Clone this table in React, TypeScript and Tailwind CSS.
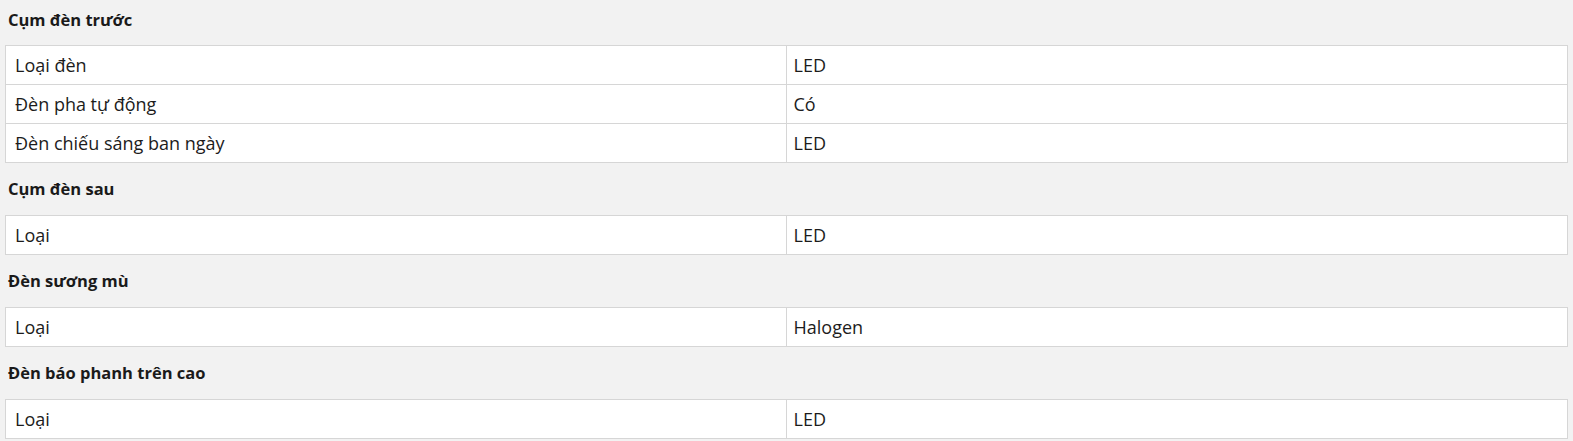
const sections = [
  {
    title: "Cụm đèn trước",
    rows: [
      ["Loại đèn", "LED"],
      ["Đèn pha tự động", "Có"],
      ["Đèn chiếu sáng ban ngày", "LED"],
    ],
  },
  { title: "Cụm đèn sau", rows: [["Loại", "LED"]] },
  { title: "Đèn sương mù", rows: [["Loại", "Halogen"]] },
  { title: "Đèn báo phanh trên cao", rows: [["Loại", "LED"]] },
]

export default function App() {
  return (
    <div className="min-h-screen w-full bg-[#f2f2f2] px-[5px] font-['Open_Sans','Noto_Sans',sans-serif] text-[#1c1c1c]">
      {sections.map((section, i) => (
        <div key={section.title}>
          {/* tiêu đề nhóm */}
          <div
            className={
              i === 0
                ? "flex h-[45px] items-center pb-[5px] pl-[3px] text-[16.5px] font-bold text-[#1a1a1a]"
                : "flex h-[52px] items-center pl-[3px] text-[16.5px] font-bold text-[#1a1a1a]"
            }
          >
            {section.title}
          </div>
          <div className="border border-[#d6d6d6] bg-white">
            {section.rows.map(([label, value], idx) => (
              <div
                key={label}
                className={
                  idx === 0
                    ? "grid h-[38px] grid-cols-2"
                    : "grid h-[39px] grid-cols-2 border-t border-[#d6d6d6]"
                }
              >
                <div className="flex items-center border-r border-[#d6d6d6] pl-[9px] text-[18px]">
                  {label}
                </div>
                <div className="flex items-center pl-[7px] text-[18px]">{value}</div>
              </div>
            ))}
          </div>
        </div>
      ))}
    </div>
  )
}
